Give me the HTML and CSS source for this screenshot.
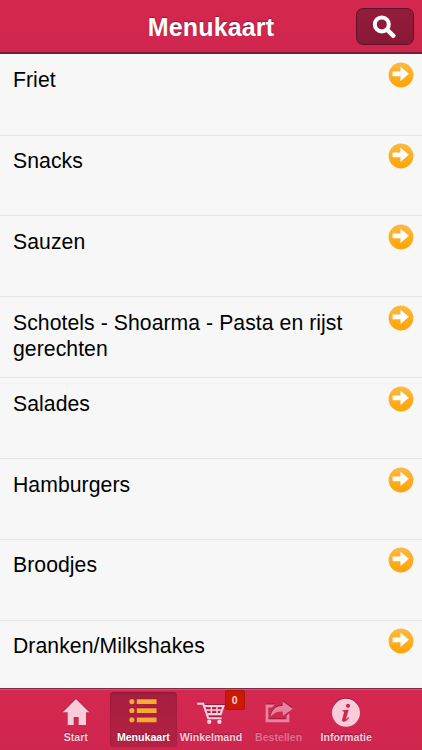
FILE: index.html
```html
<!DOCTYPE html>
<html lang="nl">
<head>
<meta charset="utf-8">
<title>Menukaart</title>
<link rel="stylesheet" href="styles.css">
</head>
<body>
<svg class="defs" width="0" height="0" aria-hidden="true">
  <defs>
    <linearGradient id="amber" x1="0" y1="0" x2="0" y2="1"><stop offset="0" stop-color="#fbb944"/><stop offset="1" stop-color="#fea404"/></linearGradient>
    <symbol id="go" viewBox="0 0 26 26"><circle cx="13" cy="13" r="12.4" fill="url(#amber)"/><path d="M4.6 9.4H12.5V4.7L20.9 11.8L12.5 19V14.2H4.6Z" fill="#fff"/></symbol>
  </defs>
</svg>
<div class="app">
  <header class="header">
    <h1 class="title">Menukaart</h1>
    <button class="search" aria-label="Zoeken">
      <svg width="26" height="26" viewBox="0 0 26 26" fill="none" stroke="#fff" stroke-linecap="round"><circle cx="10.8" cy="10.4" r="7" stroke-width="4"/><path d="M16 15.6L22.4 21.8" stroke-width="4.4"/></svg>
    </button>
  </header>
  <main class="list">
    <div class="row"><span class="label">Friet</span><svg class="go"><use href="#go"/></svg></div>
    <div class="row"><span class="label">Snacks</span><svg class="go"><use href="#go"/></svg></div>
    <div class="row"><span class="label">Sauzen</span><svg class="go"><use href="#go"/></svg></div>
    <div class="row"><span class="label">Schotels - Shoarma - Pasta en rijst gerechten</span><svg class="go"><use href="#go"/></svg></div>
    <div class="row"><span class="label">Salades</span><svg class="go"><use href="#go"/></svg></div>
    <div class="row"><span class="label">Hamburgers</span><svg class="go"><use href="#go"/></svg></div>
    <div class="row"><span class="label">Broodjes</span><svg class="go"><use href="#go"/></svg></div>
    <div class="row"><span class="label">Dranken/Milkshakes</span><svg class="go"><use href="#go"/></svg></div>
  </main>
  <nav class="tabs">
    <a class="tab">
      <svg class="icon" viewBox="0 0 30 30" fill="#facbd9"><path d="M15 2L28.3 15.2H25V28H17.6V20H12.7V28H6.7V15.2H1.7Z"/></svg>
      <span>Start</span>
    </a>
    <a class="tab active">
      <svg class="icon" viewBox="0 0 30 30" fill="#f9aa30"><circle cx="3.9" cy="4.6" r="2.6"/><circle cx="3.9" cy="13.5" r="2.6"/><circle cx="3.9" cy="22.8" r="2.6"/><path d="M8.8 2.2H28.6V7H8.8ZM8.8 11.3H28.6V16.1H8.8ZM8.8 20.5H28.6V25.2H8.8Z"/></svg>
      <span>Menukaart</span>
    </a>
    <a class="tab">
      <svg class="icon" viewBox="0 0 30 30" fill="none" stroke="#facbd9"><path d="M1.2 6.6H7.2L12.2 21.2H25.6" stroke-width="2.1"/><path d="M8.8 9H27.4L24.7 17.2H11.8" stroke-width="2.2"/><path d="M10 13.1H26M15.3 9V17M21 9V17" stroke-width="1.5"/><circle cx="13.2" cy="24.8" r="2.2" fill="#facbd9" stroke="none"/><circle cx="23.4" cy="24.8" r="2.2" fill="#facbd9" stroke="none"/></svg>
      <span>Winkelmand</span>
      <b class="badge">0</b>
    </a>
    <a class="tab disabled">
      <svg class="icon" viewBox="0 0 30 30" fill="#e8839f"><path d="M1.5 7.5H11L7.8 10.4H4.4V22.3H22.5V18.5L25.4 16V25.2H1.5Z"/><path d="M18.8 4.4L28.8 11.7L18.8 18.8V14.5C14 14 10 15.5 6.6 19.8C7.6 12.5 12 8.7 18.8 8.7Z"/></svg>
      <span>Bestellen</span>
    </a>
    <a class="tab">
      <svg class="icon" viewBox="0 0 30 30"><circle cx="15" cy="15.8" r="14" fill="#facbd9"/><g fill="#cf2850"><circle cx="17" cy="8.8" r="2.1"/><path d="M11.5 13.2L17.7 12.7L14.9 22.2Q15.8 22 17.2 20.1L18.1 20.8Q15.3 25.1 12.3 24.8Q10.5 24.5 11.2 21.9L13.1 15.3Q13.3 14.4 11.4 14.3Z"/></g></svg>
      <span>Informatie</span>
    </a>
  </nav>
</div>
</body>
</html>
```
FILE: styles.css
```css
* { box-sizing: border-box; }
body { margin: 0; font-family: "Liberation Sans", Arial, sans-serif; background: #f7f7f7; }
.defs { display: block; }
.app { height: 750px; width: 422px; display: flex; flex-direction: column; overflow: hidden; }
.header {
  height: 54px; flex: none; display: grid; grid-template-columns: 66px 1fr 66px;
  background: linear-gradient(#d5274f, #cf264f); border-bottom: 2px solid #722138;
}
.title {
  grid-column: 2; margin: 0; text-align: center; color: #fff; font-size: 25px;
  line-height: 55px; letter-spacing: .15px; text-shadow: 0 -1px 1px #79203b; white-space: nowrap;
}
.search {
  width: 58px; height: 37px; margin: 8px 0 0; padding: 0 3px 0 0; display: flex; align-items: center; justify-content: center;
  border: 1px solid #5f1229; border-radius: 7px; background: linear-gradient(#941c3b, #871936);
}
.list { flex: 1; min-height: 0; overflow: hidden; padding-top: .7px; }
.row {
  height: 80.85px; display: flex; justify-content: space-between; align-items: flex-start;
  padding: 7.6px 8px 0 13px; border-bottom: 1px solid #e4e4e4;
}
.label { width: 350px; margin-top: 5px; font-size: 21.2px; line-height: 26px; color: #000; letter-spacing: .06px; }
.go { width: 26px; height: 26px; flex: none; }
.tabs {
  height: 62px; flex: none; display: grid; grid-template-columns: repeat(5, 67.6px); justify-content: center;
  background: linear-gradient(#d4284f, #cf264f); border-top: 1px solid #842b43; box-shadow: inset 0 1px #dd5070;
}
.tab {
  position: relative; height: 55px; margin-top: 3px; display: flex; flex-direction: column; align-items: center;
  padding-top: 5px; color: #facbd9; font-size: 10.6px; line-height: 13px; font-weight: bold;
  white-space: nowrap; text-shadow: 0 -1px 1px #811b37;
}
.icon { width: 30px; height: 30px; margin-bottom: 4px; filter: drop-shadow(0 -1px .5px #951d3e); }
.active { color: #fff; background: linear-gradient(#a51f3f, #b42144); border-radius: 4px; box-shadow: inset 0 1px 2px #8b1935; }
.disabled { color: #e06f8f; text-shadow: 0 -1px 1px #b4244a; }
.badge {
  position: absolute; left: 47.5px; top: -2px; width: 20px; height: 20px; text-align: center; line-height: 18px;
  border: 1px solid #ac1708; border-radius: 2px; background: #cb1a02; color: #ffd5d0; font-size: 10.5px; text-shadow: none;
}
```
